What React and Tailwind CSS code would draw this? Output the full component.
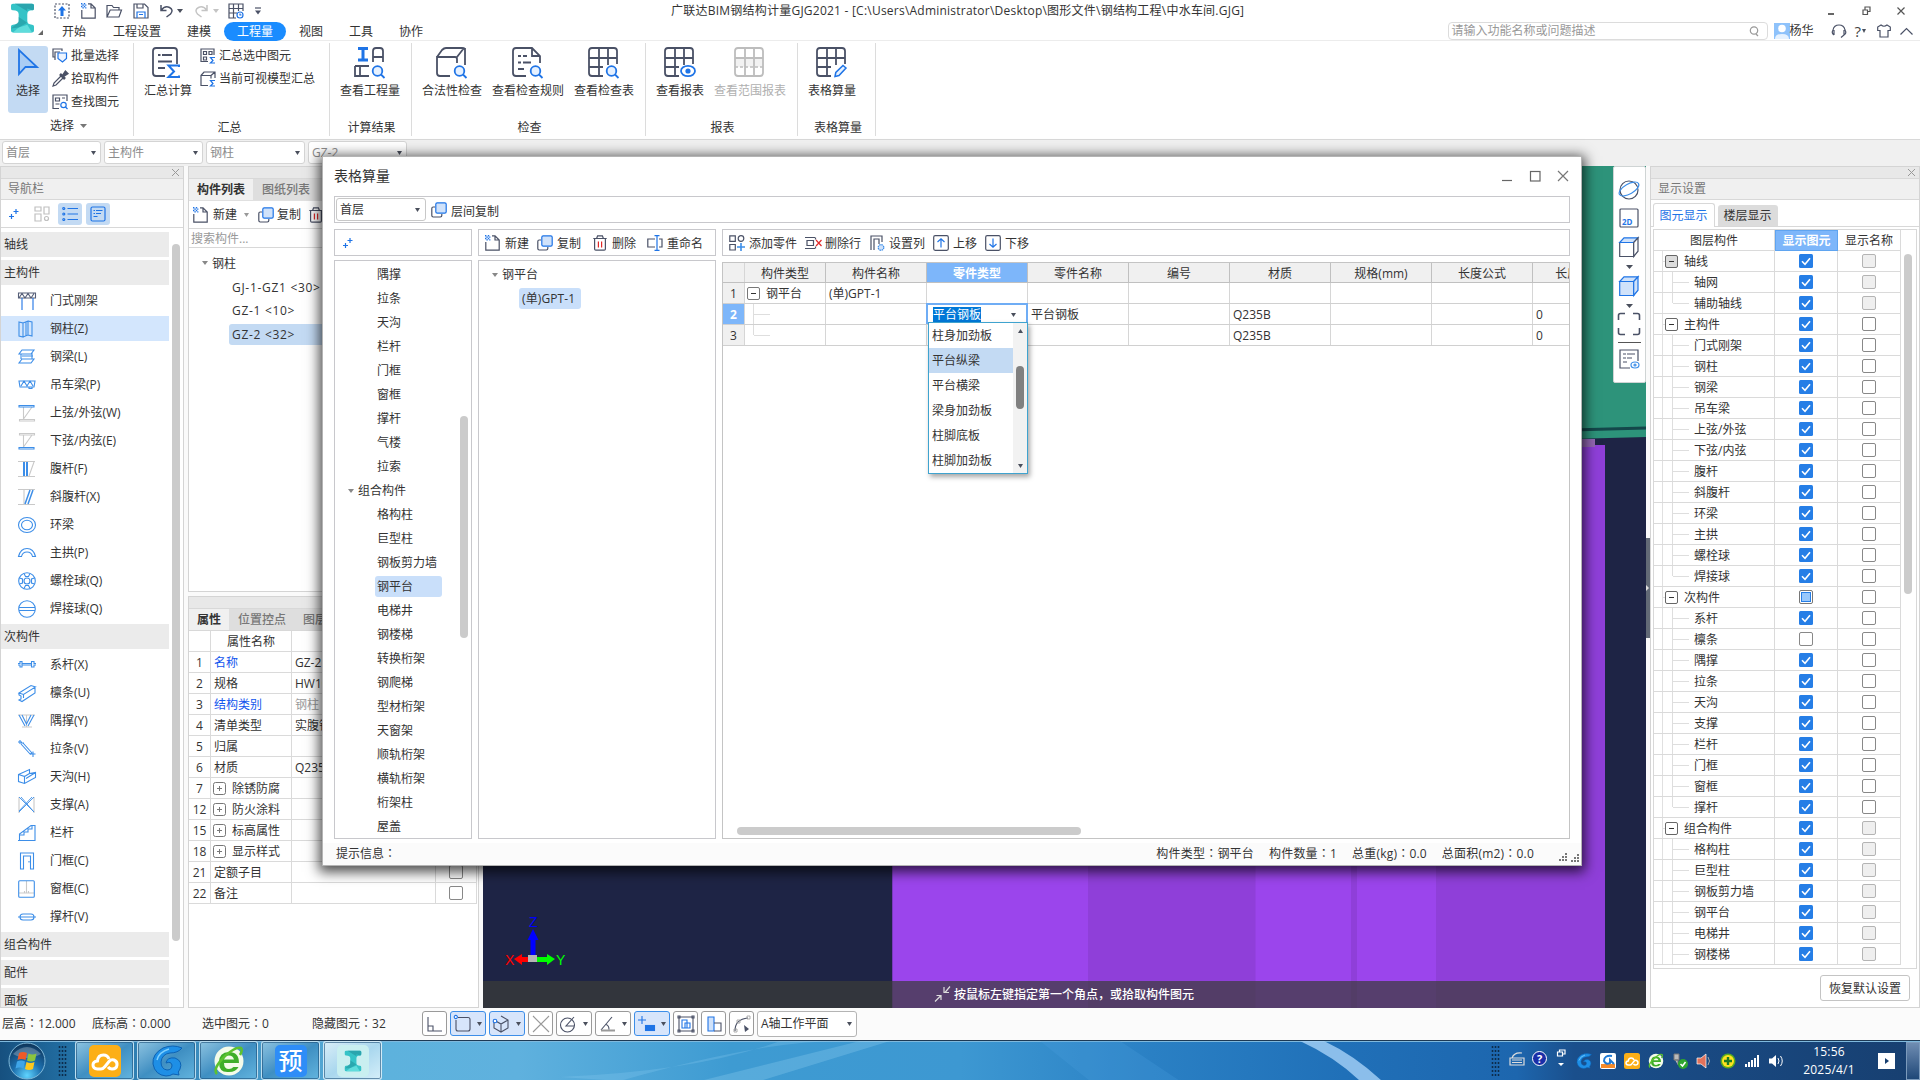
import React from 'react';
import clsx from 'clsx';

const DARK = '#4a5166';
const BLUE = '#1f74e6';
const SKY = '#3d8ee8';
const PALE = '#d0e2fa';

const Svg = ({ w = 16, h = w, vb, className, stroke = DARK, sw = 1.2, children }) => (
  <svg
    width={w}
    height={h}
    viewBox={vb || `0 0 ${w} ${h}`}
    fill="none"
    stroke={stroke}
    strokeWidth={sw}
    className={clsx('shrink-0 overflow-visible', className)}
  >
    {children}
  </svg>
);

const Caret = ({ className, color = '#4a4f5c', w = 6, up }) => (
  <svg width={w} height="4" viewBox="0 0 6 4" className={clsx('shrink-0', className)} preserveAspectRatio="none">
    <path d={up ? 'M0 4h6L3 0z' : 'M0 0h6L3 4z'} fill={color} />
  </svg>
);

// full-width colon centred in its cell
const Field = ({ name, value, className }) => (
  <span className={className}>
    {name}
    <span className="font-['Noto_Sans_CJK_JP',sans-serif] leading-none">：</span>
    {value}
  </span>
);

/* ---------- shared small icons ---------- */

const NewIcon = () => (
  <Svg>
    <path d="M.8 7v8.2h13.4V5L10 .8H7M10 .8V5h4.2" />
    <path d="M0 0h1.4v1.4H0zM2.8 0h1.4v1.4H2.8zM1.4 1.4h1.4v1.4H1.4zM4.2 1.4h1.2v1.4H4.2zM0 2.8h1.4v1.4H0zM2.8 2.8h1.4v1.4H2.8zM1.4 4.2h1.4v1.2H1.4zM4.2 4.2h1.2v1.2H4.2z" fill={BLUE} stroke="none" />
  </Svg>
);

const CopyIcon = () => (
  <Svg>
    <path d="M4 5H2.2Q.8 5 .8 6.4v7.2Q.8 15 2.2 15h7.2q1.4 0 1.4-1.4V12" />
    <rect x="4.8" y=".8" width="10.4" height="10.4" rx="1.4" stroke={BLUE} fill={PALE} />
  </Svg>
);

const TrashIcon = () => (
  <Svg w={14} h={16}>
    <path d="M.3 3.5h13.4M3.6 3.5L4.6.8h4.8l1 2.7M1.6 3.5V14q0 1.2 1.2 1.2h8.4q1.2 0 1.2-1.2V3.5" />
    <path d="M5.4 6.5v6M8.6 6.5v6" stroke="#e02828" />
  </Svg>
);

const SparkIcon = () => (
  <Svg w={10} h={10} stroke={BLUE}>
    <path d="M7 0v5M4.5 2.5h5M2.5 5v5M0 7.5h5" />
  </Svg>
);

const CubeIcon = ({ blue }) => (
  <Svg w={20} h={20} stroke={blue ? BLUE : DARK}>
    <path d="M.7 5.5h14v14h-14z" fill={blue ? PALE : 'none'} />
    <path d="M.7 5.5L5 .8h14l-4.3 4.7z" stroke={BLUE} fill={PALE} />
    <path d="M19 .8v13.4l-4.3 5.3v-14z" fill={blue ? PALE : '#fff'} />
  </Svg>
);

/* ---------- ribbon ---------- */

const GridBase = ({ color = DARK }) => (
  <path
    d="M15 29H4q-3 0-3-3V4q0-3 3-3h22q3 0 3 3v13M1 11h28M1 20h14M11 1v28M20 1v17"
    stroke={color}
    strokeWidth="1.8"
  />
);

const Lens = () => (
  <g stroke={BLUE} strokeWidth="1.8">
    <circle cx="23.5" cy="24" r="4.8" fill="#e6f1ff" />
    <path d="M27 27.5l3.5 3.5" />
  </g>
);

const bigIcons = {
  sum: (
    <>
      <path d="M13 29H4q-3 0-3-3V4q0-3 3-3h18q3 0 3 3v13" strokeWidth="1.8" />
      <path d="M6 8h2.500M10 8h10M6 14.500h14M6 21h7" strokeWidth="1.8" />
      <path d="M27 20v-1.500H16.500L22 24.500 16.500 30H27v-1.500" stroke={BLUE} strokeWidth="2" />
    </>
  ),
  quantity: (
    <>
      <path d="M4 1.500h10M4 13h10M9 1.500V13" stroke={BLUE} strokeWidth="3" />
      <path d="M19 15V4q0-3 3-3h4q3 0 3 3v11M19 10h10M1 19v10h14M1 19h14M6 19v10" strokeWidth="1.8" />
      <Lens />
    </>
  ),
  box: (
    <>
      <path d="M14 29H4q-3 0-3-3V10h18q2 0 2 2v4M1 10l5-7q2-2 4-2h16q2 0 3 1M28 1l-7 9M29 1v17" strokeWidth="1.8" />
      <Lens />
    </>
  ),
  rules: (
    <>
      <path d="M14 29H4q-3 0-3-3V4q0-3 3-3h16l8 8v7M20 1v8h8" strokeWidth="1.8" />
      <path d="M6 9h3M11 9h4M6 15.500h3M11 15.500h8M6 22h6" strokeWidth="1.8" />
      <Lens />
    </>
  ),
  table: (
    <>
      <GridBase />
      <Lens />
    </>
  ),
  report: (
    <>
      <GridBase />
      <ellipse cx="24" cy="24" rx="7" ry="5.200" stroke={BLUE} strokeWidth="1.8" fill="#fff" />
      <circle cx="24" cy="24" r="2.600" fill={BLUE} stroke="none" />
    </>
  ),
  range: (
    <>
      <path d="M1 11h28v9H1z" fill="#f2f2f2" stroke="none" />
      <path d="M4 1h22q3 0 3 3v22q0 3-3 3H4q-3 0-3-3V4q0-3 3-3zM1 11h28M11 1v28M20 1v28" stroke="#bdbdbd" strokeWidth="1.8" />
      <path d="M1 20h28" stroke="#bdbdbd" strokeWidth="1.4" strokeDasharray="3 2" />
    </>
  ),
  edit: (
    <>
      <GridBase />
      <path d="M19 29.500l.8-4L27 18.500l3 2.500-7 7.500z" stroke={BLUE} strokeWidth="1.5" fill="#e6f1ff" />
    </>
  ),
};

const BigButton = ({ icon, label, width, disabled }) => (
  <div className={clsx('flex shrink-0 flex-col items-center', width)}>
    <Svg w={31} h={32} className="mt-[4px] mr-[2px]">{bigIcons[icon]}</Svg>
    <span className={clsx('mt-[3px] leading-[18px] whitespace-nowrap', disabled && 'text-[#b0b0b0]')}>{label}</span>
  </div>
);

const Group = ({ label, width, labelPad, children }) => (
  <div className={clsx('flex h-[93px] shrink-0 flex-col justify-between border-r border-[#dcdcdc]', width)}>
    <div className="flex">{children}</div>
    <div className={clsx('flex h-[17px] items-center justify-center', labelPad)}>{label}</div>
  </div>
);

const SmallItem = ({ icon, label }) => (
  <div className="flex h-[23px] items-center gap-[3px] whitespace-nowrap">
    {icon}
    <span>{label}</span>
  </div>
);

const Logo = ({ w, h, className }) => (
  <svg width={w} height={h} viewBox="0 0 24 32" className={className}>
    <path d="M2 1h20q2 0 2 2v3q0 2-2 2-5 0-5 4v7q0 4 5 4 2 0 2 2v4q0 2-2 2H2q-2 0-2-2v-4q0-2 2-2 6 0 6-4v-7q0-4-6-4Q0 8 0 6V3q0-2 2-2z" fill="#35c3c7" />
    <path d="M4 1l13 8V6l5 2q2 0 2-2V3q0-2-2-2z" fill="#2aa5ae" />
    <path d="M2 31l6-5 9-3 5 8z" fill="#5fdcdb" />
    <path d="M0 27l8-7v-5l9 6-9 5z" fill="#23969f" opacity=".6" />
  </svg>
);

const ribbonTabs = [
  ['开始', 'ml-[62px]'],
  ['工程设置', 'ml-[27px]'],
  ['建模', 'ml-[26px]'],
  ['工程量', 'ml-[13px]'],
  ['视图', 'ml-[13px]'],
  ['工具', 'ml-[26px]'],
  ['协作', 'ml-[26px]'],
];

const TitleBar = () => (
  <div className="relative h-[41px] shrink-0 border-b border-[#ececec] bg-white">
    <Logo w={23} h={32} className="absolute top-[2px] left-[11px]" />
    <svg width="5" height="5" className="absolute top-[30px] left-[38px]">
      <path d="M5 0v5H0z" fill="#666" />
    </svg>
    <div className="flex h-[21px] items-center pl-[54px]">
      <Svg>
        <rect x="1" y="1" width="14" height="14" strokeDasharray="2 1.500" />
        <path d="M8 3l4 4.500H9.500V13h-3V7.500H4z" fill={BLUE} stroke="none" />
      </Svg>
      <span className="ml-[11px]"><NewIcon /></span>
      <Svg className="ml-[9px]">
        <path d="M1 14V2.500h5l1.500 2H13V7M1 14L4.200 7H15.500L13 14z" />
      </Svg>
      <Svg className="ml-[11px]">
        <path d="M1 1h10.500L15 4.500V15H1zM4 1v4h6V1" />
        <path d="M4 15V9h8v6M6 11.500h4" stroke={BLUE} />
      </Svg>
      <Svg w={14} h={14} className="ml-[10px]" sw={1.5}>
        <path d="M2 1v5.500h5.500M2 6.500Q6 1 10.500 3.500t1 6.500L7.500 13" />
      </Svg>
      <Caret className="ml-[4px]" />
      <Svg w={14} h={14} className="ml-[12px]" sw={1.5} stroke="#c4c4c4">
        <path d="M12 1v5.500H6.500M12 6.500Q8 1 3.500 3.500t-1 6.500L6.500 13" />
      </Svg>
      <Caret className="ml-[4px]" color="#c4c4c4" />
      <Svg className="ml-[9px]">
        <path d="M8 15H1V1h14v7M1 5.500h14M1 10h8M5.500 1v14M10.500 1v7" />
        <circle cx="12" cy="12" r="3" stroke={BLUE} fill="#fff" />
        <path d="M12 10.500V12h1.500" stroke={BLUE} />
      </Svg>
      <Svg w={6} h={8} className="ml-[11px]">
        <path d="M0 1h6" />
        <path d="M0 3.500h6L3 7.500z" fill={DARK} stroke="none" />
      </Svg>
      <span className="ml-[410px] tracking-[0.23px] whitespace-nowrap">
        广联达BIM钢结构计量GJG2021 - [C:\Users\Administrator\Desktop\图形文件\钢结构工程\中水车间.GJG]
      </span>
      <div className="mr-[15px] ml-auto flex items-center">
        <Svg w={8} h={8} sw={2} stroke="#666"><path d="M1 7h6" /></Svg>
        <Svg w={9} h={9} className="ml-[27px]" stroke="#555"><path d="M1 4h4.500v4.500H1zM3 4V1h5v4.500H5.500" /></Svg>
        <Svg w={8} h={8} className="ml-[26px]" stroke="#555"><path d="M.5.500l7 7M7.500.500l-7 7" /></Svg>
      </div>
    </div>
    <div className="flex h-[20px] items-center">
      {ribbonTabs.map(([label, margin]) => (
        <span
          key={label}
          className={clsx('leading-[19px] whitespace-nowrap', margin, label === '工程量' && 'h-[19px] rounded-full bg-[#1a8cff] px-[13px] text-white')}
        >
          {label}
        </span>
      ))}
      <div className="ml-auto flex h-[18px] w-[320px] items-center justify-between rounded-sm border border-[#dcdcdc] pr-[8px] pl-[3px] text-[#999]">
        <span>请输入功能名称或问题描述</span>
        <Svg w={10} h={10} stroke="#999"><circle cx="5" cy="4.500" r="3.700" /><path d="M7 8l2 2" /></Svg>
      </div>
      <Svg w={16} h={16} className="ml-[6px] bg-[#8ec2fb]" stroke="none">
        <circle cx="8" cy="5.500" r="3.800" fill="#fff" />
        <path d="M1 16q0-5 7-5t7 5z" fill="#e6f2ff" />
      </Svg>
      <span>杨华</span>
      <Svg w={16} h={14} className="ml-[17px]"><path d="M3 11Q0 9 2 6q1-5 6-5t6 5q2 3-1 5M3 6v5M13 6v5l-3 2.500" /></Svg>
      <span className="ml-[8px] text-[15px] text-[#444]">?</span>
      <Caret className="ml-[1px]" w={4} />
      <Svg w={14} h={14} className="ml-[11px]"><path d="M4 1q3 2.500 6 0l3.300 2v3.500H11V13H3V6.500H.7V3z" /></Svg>
      <Svg w={13} h={8} className="mr-[7px] ml-[9px]"><path d="M.5 7.500L6.500 1.500l6 6" /></Svg>
    </div>
  </div>
);

const Ribbon = () => (
  <div className="flex h-[99px] shrink-0 border-b border-[#d8d8d8] bg-white pt-[2px]">
    <Group
      width="w-[134px]"
      labelPad="mb-[2px] gap-[6px] pl-[4px]"
      label={<><span>选择</span><Caret w={7} color="#777" /></>}
    >
      <div className="mt-[3px] ml-[8px] flex h-[67px] w-[40px] flex-col items-center rounded-[3px] bg-[#c3daf3]">
        <Svg w={22} h={28} className="mt-[3px]" stroke={BLUE} sw={1.8}>
          <path d="M2 1v24l6.500-7H20z" fill="#a9ccf4" />
        </Svg>
        <span className="mt-[5px] leading-[18px]">选择</span>
      </div>
      <div className="mt-[1px] ml-[4px] flex flex-col">
        <SmallItem
          label="批量选择"
          icon={<Svg><path d="M3 9H1V1h9v2M3 12V4h5" /><path d="M6 5h8.500v5.500L10.500 14 6 10.500z" stroke={BLUE} fill="#eef5ff" /></Svg>}
        />
        <SmallItem
          label="拾取构件"
          icon={<Svg><path d="M9 5L2 12l-1 3 3-1 7-7" /><path d="M8 3l5 5M10.500 5.500L13.500 1l1.500 1.500z" strokeWidth="2.600" /></Svg>}
        />
        <SmallItem
          label="查找图元"
          icon={<Svg><path d="M7 14.500H1V1h14v6M3.500 4h4v3h-4zM10 4h3M3.500 10h4" /><circle cx="11.500" cy="11" r="2.700" stroke={BLUE} /><path d="M13.500 13l2 2" stroke={BLUE} /></Svg>}
        />
      </div>
    </Group>
    <Group width="w-[196px]" label="汇总" labelPad="pr-[4px]">
      <BigButton icon="sum" label="汇总计算" width="ml-[4px] w-[60px]" />
      <div className="mt-[1px] ml-[2px] flex flex-col">
        <SmallItem
          label="汇总选中图元"
          icon={<Svg><path d="M8 13.500H1V1h13v6M3.500 3.500h3v3h-3zM9 3.500h3v3H9zM3.500 9h3v3h-3z" /><path d="M15 9.500H10.500l2.500 3-2.500 2.500H15" stroke={BLUE} /></Svg>}
        />
        <SmallItem
          label="当前可视模型汇总"
          icon={<Svg><path d="M8 14.500H1V4.500h10v3M1 4.500L4 1h11v6M11 4.500L15 1" /><path d="M15 9.500H10.500l2.500 3-2.500 2.500H15" stroke={BLUE} /></Svg>}
        />
      </div>
    </Group>
    <Group width="w-[82px]" label="计算结果" labelPad="pl-[2px]">
      <BigButton icon="quantity" label="查看工程量" width="w-[80px]" />
    </Group>
    <Group width="w-[234px]" label="检查" labelPad="pl-[2px]">
      <BigButton icon="box" label="合法性检查" width="w-[80px]" />
      <BigButton icon="rules" label="查看检查规则" width="w-[72px]" />
      <BigButton icon="table" label="查看检查表" width="w-[80px]" />
    </Group>
    <Group width="w-[152px]" label="报表" labelPad="pl-[2px]">
      <BigButton icon="report" label="查看报表" width="w-[68px]" />
      <BigButton icon="range" label="查看范围报表" width="w-[72px]" disabled />
    </Group>
    <Group width="w-[78px]" label="表格算量" labelPad="pl-[3px]">
      <BigButton icon="edit" label="表格算量" width="w-[68px]" />
    </Group>
  </div>
);

const FilterBar = () => (
  <div className="flex h-[26px] shrink-0 gap-[3px] bg-[#f0f0f0] pt-[1px] pl-[2px]">
    {['首层', '主构件', '钢柱', 'GZ-2'].map((t) => (
      <div key={t} className="flex h-[23px] w-[99px] items-center justify-between rounded-[3px] border border-[#d4d4d4] bg-white pr-[4px] pl-[3px] text-[#8c8c8c]">
        <span>{t}</span>
        <Caret w={5} />
      </div>
    ))}
  </div>
);

/* ---------- navigation ---------- */

const G = '#c9c9c9';
const navIcons = {
  门式刚架: <><path d="M.500 1h17v5H.500zM1 6l3-4.500L7 6l3-4.500L13 6l3-4.500" stroke="#555e77" /><path d="M4 6v12M15 6v12" stroke={BLUE} /></>,
  '钢柱(Z)': <path d="M1 2l4 1v14l-4-1zM5 3l5-2v14l-5 2M8 2v14M10 1l4 1v14l-4-1" />,
  '钢梁(L)': <path d="M4 2h12l-3 4H1zM3 6v5M14 5v6M4 11h12l-3 4H1zM4 8h11" />,
  '吊车梁(P)': <path d="M1 5h16l-1 6H2zM3 10l3-5 3 5 3-5 3 5M11 11v1.500h3V11" />,
  '上弦/外弦(W)': <><path d="M5.500 16V3M14 3L5.500 15M1.500 15.500h15v1.500h-15z" stroke={G} /><path d="M1 1.500h15v1.500H1z" /></>,
  '下弦/内弦(E)': <><path d="M5.500 16V3M14 3L5.500 15M1.500 1.500h15v1.500h-15z" stroke={G} /><path d="M1 15.500h15v1.500H1z" /></>,
  '腹杆(F)': <><path d="M0 1.500h17M0 16.500h17M16 2L11 16" stroke={G} /><path d="M6 2v14M9 2v14" strokeWidth="2" /></>,
  '斜腹杆(X)': <><path d="M0 1.500h17M0 16.500h17M6 2v14" stroke={G} /><path d="M12 2L7 16M15 2l-5 14" strokeWidth="1.500" /></>,
  环梁: <><ellipse cx="9" cy="9" rx="8.500" ry="7.500" /><ellipse cx="9" cy="9" rx="5.500" ry="4.800" /></>,
  '主拱(P)': <path d="M.500 12.500q2-8 8.500-8t8.500 8h-3q-1-4.500-5.500-4.500t-5.500 4.500z" />,
  '螺栓球(Q)': <><circle cx="9" cy="9" r="8.300" /><circle cx="9" cy="9" r="3" /><path d="M6 1.500l1.500 3h3l1.500-3M6 16.500l1.500-3h3l1.500 3M1.500 6l3 1v4l-3 1M16.500 6l-3 1v4l3 1" /></>,
  '焊接球(Q)': <><circle cx="9" cy="9" r="8.300" /><path d="M1 7.500h16M1 10.500h16" /></>,
  '系杆(X)': <path d="M0 7.500h2v-2h2v5.500H2V9H0M4 7.500h9M4 9h9M18 7.500h-2v-2h-2.500v5.500H16V9h2" />,
  '檩条(U)': <path d="M1 9l12-7.500 4.500 1.500L5.500 10.500zM5.500 10.500v3.500M1 9v2l2 1v3l-2 1 3 1.500L17 9V3" />,
  '隅撑(Y)': <><path d="M0 3h17M4 15h10M8.500 3v12" stroke={G} /><path d="M1 3l6 11M4 3l4.500 9L13 3M16 3l-6 11" /></>,
  '拉条(V)': <path d="M0 2h4M2 0v4M3 4l9.500 10.500M5 3l9 10M12 14h5.500M15 11.500v5.500M3 3h3M12 14.500l2-2" />,
  '天沟(H)': <path d="M.500 6.500l11-5v4l6-1v5l-11 6-6-2zM.500 6.500l6 2v7M6.500 8.500l5-3M8 10.500l9.500-6" />,
  '支撑(A)': <><path d="M1 1v16M16 1v16" stroke={G} /><path d="M1 1l15 15M3 1l13 15M16 1L1 16M14 1L1 15" strokeWidth=".9" /></>,
  栏杆: <path d="M0 16.500h17V1.500h-4L1.500 10v6.500M1.500 11H6V8h4V5h4V1.500" />,
  '门框(C)': <path d="M2.500 17V1h13v16h-3V4h-7v13zM11 9v1.500" />,
  '窗框(C)': <><path d="M8.500 1v12M1 13h15M6.500 13v-2M10.500 13v-2" stroke={G} /><rect x=".7" y=".7" width="15.600" height="16.600" rx="1" /></>,
  '撑杆(V)': <path d="M0 9h18M5 6h8q3 0 3 3t-3 3H5Q2 12 2 9t3-3z" />,
};

const navList = [
  { group: '轴线' },
  { group: '主构件' },
  ...['门式刚架', '钢柱(Z)', '钢梁(L)', '吊车梁(P)', '上弦/外弦(W)', '下弦/内弦(E)', '腹杆(F)', '斜腹杆(X)', '环梁', '主拱(P)', '螺栓球(Q)', '焊接球(Q)'].map((name) => ({ name })),
  { group: '次构件' },
  ...['系杆(X)', '檩条(U)', '隅撑(Y)', '拉条(V)', '天沟(H)', '支撑(A)', '栏杆', '门框(C)', '窗框(C)', '撑杆(V)'].map((name) => ({ name })),
  { group: '组合构件' },
  { group: '配件' },
  { group: '面板' },
];

const NavPanel = () => (
  <div className="flex w-[184px] shrink-0 flex-col border border-[#d4d4d4] bg-white">
    <div className="flex h-[11px] shrink-0 items-center justify-end bg-[#e8e8e8] pr-[4px]">
      <Svg w={7} h={7} stroke="#999" sw={1}><path d="M0 0l7 7M7 0L0 7" /></Svg>
    </div>
    <div className="flex h-[22px] shrink-0 items-center border-y border-[#d8d8d8] bg-[#f0f0f0] pl-[7px] text-[#777]">导航栏</div>
    <div className="flex h-[28px] shrink-0 items-center border-b border-[#d8d8d8] pl-[8px]">
      <SparkIcon />
      <Svg className="ml-[15px]" stroke="#c0c0c0">
        <path d="M1 1h6v4H1zM10 1h5v7h-5zM1 8h6v7H1z" /><circle cx="12.500" cy="12.500" r="2" />
      </Svg>
      <span className="ml-[8px] flex h-[22px] w-[24px] items-center justify-center rounded-[3px] bg-[#c3daf3]">
        <Svg stroke={BLUE}><path d="M5.500 2.500H16M5.500 8H16M5.500 13.500H16" /><circle cx="1.800" cy="2.500" r="1" /><circle cx="1.800" cy="8" r="1" /><circle cx="1.800" cy="13.500" r="1" /></Svg>
      </span>
      <span className="ml-[4px] flex h-[22px] w-[24px] items-center justify-center rounded-[3px] bg-[#c3daf3]">
        <Svg stroke={BLUE}><rect x="1" y="1" width="14" height="14" rx="1.500" /><path d="M3.500 4.500H5M6 4.500h6.500M3.500 7.500H5M6 7.500h5M3.500 10.500h4" /></Svg>
      </span>
    </div>
    <div className="flex min-h-0 flex-1 overflow-hidden">
      <div className="w-[168px] pt-[4px]">
        {navList.map((item) =>
          item.group ? (
            <div key={item.group} className="mb-[3px] flex h-[25px] items-center bg-[#ebebeb] pl-[3px]">{item.group}</div>
          ) : (
            <div
              key={item.name}
              className={clsx('mb-[3px] flex h-[25px] items-center pl-[17px]', item.name === '钢柱(Z)' && 'bg-[#d3e6fd]')}
            >
              <Svg w={18} h={18} stroke={SKY} sw={1.1}>{navIcons[item.name]}</Svg>
              <span className="ml-[14px]">{item.name}</span>
            </div>
          )
        )}
      </div>
      <div className="mt-[16px] ml-[3px] h-[697px] w-[8px] rounded-full bg-[#cbcbcb]" />
    </div>
  </div>
);

/* ---------- component list + properties ---------- */

const ComponentPanel = () => (
  <div className="flex h-[426px] shrink-0 flex-col border border-[#d4d4d4] bg-white">
    <div className="h-[12px] shrink-0 border-b border-[#d8d8d8] bg-[#e8e8e8]" />
    <div className="flex h-[22px] shrink-0 border-b border-[#e0e0e0] bg-[#dedede] leading-[21px]">
      <span className="w-[64px] bg-[#f0f0f0] text-center font-bold">构件列表</span>
      <span className="ml-[9px] font-medium text-[#777]">图纸列表</span>
    </div>
    <div className="flex h-[28px] shrink-0 items-center border-b border-[#d8d8d8] pl-[4px]">
      <NewIcon />
      <span className="mt-px ml-[4px]">新建</span>
      <Caret w={5} color="#999" className="ml-[7px]" />
      <span className="ml-[9px]"><CopyIcon /></span>
      <span className="mt-px ml-[3px]">复制</span>
      <span className="ml-[8px]"><TrashIcon /></span>
    </div>
    <div className="flex h-[19px] shrink-0 items-center border-b border-[#d8d8d8] pt-px pl-[2px] text-[#999]">搜索构件...</div>
    <div className="pt-[3px] leading-[21px] tracking-[0.7px]">
      <div className="flex h-[24px] items-center pl-[13px] tracking-normal">
        <Caret color="#888" />
        <span className="ml-[4px]">钢柱</span>
      </div>
      <div className="flex h-[24px] items-center pl-[43px] whitespace-nowrap">GJ-1-GZ1 &lt;30&gt;</div>
      <div className="flex h-[23px] items-center pl-[43px]">GZ-1 &lt;10&gt;</div>
      <div className="mt-[2px] ml-[40px] h-[21px] rounded-[3px] bg-[#c3daf3] pl-[3px]">GZ-2 &lt;32&gt;</div>
    </div>
  </div>
);

const propRows = [
  [1, '名称', 'GZ-2', 'blue'],
  [2, '规格', 'HW100*100'],
  [3, '结构类别', '钢柱', 'blue'],
  [4, '清单类型', '实腹钢柱'],
  [5, '归属', ''],
  [6, '材质', 'Q235B'],
  [7, '除锈防腐', '', 'plus'],
  [12, '防火涂料', '', 'plus'],
  [15, '标高属性', '', 'plus'],
  [18, '显示样式', '', 'plus'],
  [21, '定额子目', ''],
  [22, '备注', ''],
];

const PropertyPanel = () => (
  <div className="mt-[4px] flex min-h-0 flex-1 flex-col border border-[#d4d4d4] bg-white">
    <div className="h-[12px] shrink-0 border-b border-[#d8d8d8] bg-[#e8e8e8]" />
    <div className="flex h-[22px] shrink-0 border-b border-[#d8d8d8] bg-[#dedede] leading-[21px]">
      <span className="w-[40px] bg-[#f0f0f0] text-center font-bold">属性</span>
      <span className="ml-[9px] font-medium text-[#777]">位置控点</span>
      <span className="ml-[17px] font-medium text-[#777]">图层</span>
    </div>
    <div className="w-[288px]">
      <div className="flex h-[21px] border-b border-[#dadada] leading-[21px]">
        <span className="w-[22px] border-r border-[#dadada]" />
        <span className="w-[81px] border-r border-[#dadada] text-center">属性名称</span>
        <span className="w-[144px] border-r border-[#dadada] text-center">属性值</span>
        <span className="flex-1 border-r border-[#dadada]" />
      </div>
      {propRows.map(([n, name, value, kind]) => (
        <div key={n} className="flex h-[21px] border-b border-[#dadada] leading-[21px]">
          <span className="w-[22px] border-r border-[#dadada] text-center">{n}</span>
          <span className={clsx('flex w-[81px] items-center border-r border-[#dadada] pl-[3px]', kind === 'blue' && 'text-[#1155ee]')}>
            {kind === 'plus' && (
              <Svg w={13} h={13} className="mr-[6px] -ml-px" stroke="#777" sw={1}>
                <rect x=".5" y=".5" width="12" height="12" rx="2" />
                <path d="M4 6.500h5M6.500 4v5" />
              </Svg>
            )}
            {name}
          </span>
          <span className={clsx('w-[144px] border-r border-[#dadada] pl-[3px]', n === 3 && 'text-[#999]')}>{value}</span>
          <span className="flex flex-1 items-center justify-center border-r border-[#dadada]">
            <span className="h-[14px] w-[14px] rounded-[2px] border border-[#888]" />
          </span>
        </div>
      ))}
    </div>
  </div>
);

/* ---------- 3d view ---------- */

const ViewTools = () => (
  <div className="absolute top-0 right-0 flex h-[217px] w-[33px] flex-col items-center rounded-[2px] border border-[#cfd4d4] bg-white pr-px">
    <Svg w={22} h={20} className="mt-[13px]">
      <circle cx="11" cy="10" r="9" />
      <ellipse cx="11" cy="9" rx="11" ry="5" stroke={SKY} transform="rotate(-30 11 9)" />
    </Svg>
    <Svg w={20} h={20} className="mt-[8px]">
      <rect x="1" y="1" width="18" height="18" rx="1" />
      <text x="3" y="16.500" fontSize="8" fontWeight="bold" fill={BLUE} stroke="none">2D</text>
    </Svg>
    <span className="mt-[9px]"><CubeIcon /></span>
    <Caret w={7} className="mt-[8px]" />
    <span className="mt-[7px]"><CubeIcon blue /></span>
    <Caret w={7} className="mt-[8px]" />
    <Svg w={24} h={24} className="mt-[4px]" sw={1.600}>
      <path d="M1.500 8V3.500q0-2 2-2H8M16 1.500h4.500q2 0 2 2V8M22.500 16v4.500q0 2-2 2H16M8 22.500H3.500q-2 0-2-2V16" />
    </Svg>
    <div className="mt-[6px] h-px w-[23px] shrink-0 bg-[#555]" />
    <Svg w={20} h={20} className="mt-[6px]">
      <path d="M11 19H1V1h18v11M4 5h3M8 5h8M4 9h3M8 9h5M4 13h4" />
      <ellipse cx="16" cy="16" rx="4" ry="3" stroke={SKY} fill="#fff" />
      <circle cx="16" cy="16" r="1" stroke={SKY} />
    </Svg>
  </div>
);

const Viewport = () => (
  <div className="relative ml-[4px] w-[1163px] shrink-0 overflow-hidden bg-[#1e2445]">
    <svg width="1163" height="842" viewBox="483 166 1163 842" className="block">
      <rect x="483" y="166" width="1163" height="842" fill="#1e2445" />
      <path d="M1500 166h146v271l-146 4z" fill="#2d937a" />
      <path d="M1500 430.500l146-4v3l-146 4z" fill="#14474a" />
      <rect x="892.500" y="445" width="712.500" height="563" fill="#8f3fd9" />
      <rect x="892.500" y="600" width="195.500" height="408" fill="#9b45ec" />
      <rect x="1255.500" y="600" width="180.500" height="408" fill="#9b45ec" />
      <rect x="1351" y="600" width="6" height="408" fill="#8f3fd9" />
      <rect x="1570" y="439" width="25" height="8" fill="#9467b4" />
      <path d="M533 929l-5.500 11h3v15h5v-15h3z" fill="#0000ff" />
      <path d="M514 959l8-5v3h9v5h-9v3z" fill="#ff0000" />
      <path d="M555 959l-8-5v3h-11v5h11v3z" fill="#00ff00" />
      <path d="M528 955h9v7h-9z" fill="#b5b5b5" />
      <g fontSize="14" fontFamily="Liberation Sans">
        <text x="529" y="927" fill="#0000ff">Z</text>
        <text x="505" y="965" fill="#ff0000">X</text>
        <text x="556" y="965" fill="#00ff00">Y</text>
      </g>
    </svg>
    <div className="absolute bottom-0 left-0 flex h-[27px] w-full items-center bg-[rgba(59,60,58,0.715)] pl-[452px] font-medium text-white">
      <Svg w={16} h={16} className="-mt-[2px]" stroke="#ddd">
        <path d="M0 15.500l6-6M1.500 9.500H6V14M15 .5l-5 6M9 1v5.500h5" />
      </Svg>
      <span className="ml-[3px]">按鼠标左键指定第一个角点，或拾取构件图元</span>
    </div>
    <ViewTools />
  </div>
);

/* ---------- display settings ---------- */

const Check = ({ state }) => {
  if (state === 'on') {
    return (
      <svg width="14" height="14" viewBox="0 0 14 14">
        <rect width="14" height="14" rx="1.500" fill="#267ee6" />
        <path d="M3 7.200l3 3 5-6" fill="none" stroke="#fff" strokeWidth="1.600" />
      </svg>
    );
  }
  if (state === 'part') {
    return (
      <span className="flex h-[14px] w-[14px] items-center justify-center rounded-[2px] border border-[#777] bg-white">
        <span className="h-[10px] w-[10px] border border-[#267ee6] bg-[#98c8fc]" />
      </span>
    );
  }
  return (
    <span className={clsx('h-[14px] w-[14px] rounded-[2px] border', state === 'disabled' ? 'border-[#b4b4b4] bg-[#efefef]' : 'border-[#888] bg-white')} />
  );
};

const layerGroups = [
  { name: '轴线', items: ['轴网', '辅助轴线'], label: 'disabled' },
  { name: '主构件', items: ['门式刚架', '钢柱', '钢梁', '吊车梁', '上弦/外弦', '下弦/内弦', '腹杆', '斜腹杆', '环梁', '主拱', '螺栓球', '焊接球'], label: 'off' },
  { name: '次构件', items: ['系杆', '檩条', '隅撑', '拉条', '天沟', '支撑', '栏杆', '门框', '窗框', '撑杆'], label: 'off', part: true },
  { name: '组合构件', items: ['格构柱', '巨型柱', '钢板剪力墙', '钢平台', '电梯井', '钢楼梯'], label: 'disabled', open: true },
];

const LayerRow = ({ parent, last, name, show, label }) => (
  <div className="flex h-[21px] border-b border-[#dadada]">
    <div className="flex w-[121px] items-center border-r border-[#dadada]">
      <span className="h-full w-[9px] border-r border-[#e0e0e0]" />
      {parent ? (
        <>
          <span className="h-px w-[3px] bg-[#e0e0e0]" />
          <Svg w={13} h={13} className="-ml-px" stroke="#666" sw={1}>
            <rect x=".5" y=".5" width="12" height="12" rx="1.500" fill={name === '轴线' ? '#dcdcdc' : '#fff'} />
            <path d="M4 6.500h5" stroke="#333" />
          </Svg>
          <span className="mt-px ml-[6px] leading-[20px]">{name}</span>
        </>
      ) : (
        <>
          <span className={clsx('w-[10px] self-start border-r border-[#dedede]', last ? 'h-[10px]' : 'h-full')} />
          <span className="h-px w-[16px] bg-[#dedede]" />
          <span className="mt-px ml-[5px] leading-[20px]">{name}</span>
        </>
      )}
    </div>
    <div className="flex w-[63px] items-center justify-center border-r border-[#dadada]"><Check state={show} /></div>
    <div className="flex w-[63px] items-center justify-center border-r border-[#dadada]"><Check state={label} /></div>
  </div>
);

const DisplayPanel = () => (
  <div className="ml-auto flex w-[270px] shrink-0 flex-col border border-[#d4d4d4] bg-white">
    <div className="flex h-[11px] shrink-0 items-center justify-end bg-[#e8e8e8] pr-[4px]">
      <Svg w={7} h={7} stroke="#999" sw={1}><path d="M0 0l7 7M7 0L0 7" /></Svg>
    </div>
    <div className="flex h-[22px] shrink-0 items-center border-y border-[#d8d8d8] bg-[#f0f0f0] pl-[7px] text-[#777]">显示设置</div>
    <div className="flex h-[27px] shrink-0 items-end gap-[3px] border-b border-[#d8d8d8] pl-[2px]">
      <span className="-mb-px h-[24px] w-[62px] rounded-t-[3px] border border-b-0 border-[#d8d8d8] bg-white pr-px text-center leading-[24px] whitespace-nowrap text-[#1f74e6]">图元显示</span>
      <span className="h-[21px] w-[60px] rounded-t-[3px] bg-[#dcdcdc] pr-px text-center leading-[21px]">楼层显示</span>
    </div>
    <div className="mt-[2px] ml-[2px] flex h-[740px] w-[264px] shrink-0 overflow-hidden border border-[#d8d8d8]">
      <div className="w-[247px] shrink-0">
        <div className="flex h-[21px] border-b border-[#dadada] text-center leading-[21px]">
          <span className="w-[121px] border-r border-[#dadada]">图层构件</span>
          <span className="-mb-px h-[21px] w-[63px] border border-[#5fa4f0] bg-[#7db6fa] leading-[19px] font-bold text-white">显示图元</span>
          <span className="w-[63px] border-r border-[#dadada]">显示名称</span>
        </div>
        {layerGroups.map((g) => (
          <React.Fragment key={g.name}>
            <LayerRow parent name={g.name} show={g.part ? 'part' : 'on'} label={g.label} />
            {g.items.map((name, i) => (
              <LayerRow
                key={name}
                name={name}
                last={!g.open && i === g.items.length - 1}
                show={name === '檩条' ? 'off' : 'on'}
                label={g.label}
              />
            ))}
          </React.Fragment>
        ))}
      </div>
      <div className="mt-[24px] ml-[3px] h-[340px] w-[8px] rounded-full bg-[#cbcbcb]" />
    </div>
    <div className="mt-[6px] mr-[9px] flex h-[26px] w-[90px] items-center justify-center self-end rounded-[3px] border border-[#c4c4c4] pt-px">恢复默认设置</div>
  </div>
);

/* ---------- dialog ---------- */

const treeItems = [
  '隅撑', '拉条', '天沟', '栏杆', '门框', '窗框', '撑杆', '气楼', '拉索', '组合构件', '格构柱', '巨型柱',
  '钢板剪力墙', '钢平台', '电梯井', '钢楼梯', '转换桁架', '钢爬梯', '型材桁架', '天窗架', '顺轨桁架', '横轨桁架', '桁架柱', '屋盖',
];

const columns = ['构件类型', '构件名称', '零件类型', '零件名称', '编号', '材质', '规格(mm)', '长度公式', '长度(mm)'];
const partOptions = ['柱身加劲板', '平台纵梁', '平台横梁', '梁身加劲板', '柱脚底板', '柱脚加劲板'];

const Cell = ({ className, children }) => (
  <div className={clsx('h-full shrink-0 border-r border-[#d6d6d6]', className)}>{children}</div>
);

const PartSelect = () => (
  <div className="relative -mt-px -ml-px flex h-[21px] w-[102px] items-center border-2 border-b-0 border-[#6fadf5] bg-white pl-[5px]">
    <span className="h-[15px] bg-[#0078d7] leading-[15px] text-white">平台钢板</span>
    <Caret w={5} className="mr-[10px] ml-auto" />
    <div className="absolute top-[17px] left-0 z-10 flex h-[152px] w-[100px] border border-[#3fa3cf] bg-white shadow-[2px_3px_5px_rgba(0,0,0,0.35)]">
      <div className="w-[84px]">
        {partOptions.map((t) => (
          <div key={t} className={clsx('flex h-[25px] items-center pl-[3px] whitespace-nowrap', t === '平台纵梁' && 'bg-[#c3daf3]')}>{t}</div>
        ))}
      </div>
      <div className="flex flex-1 flex-col items-center bg-[#f2f2f2] pt-[6px] pb-[5px]">
        <Caret w={5} up />
        <div className="mt-[33px] h-[43px] w-[8px] rounded-full bg-[#808080]" />
        <Caret w={5} className="mt-auto" />
      </div>
    </div>
  </div>
);

const PartsGrid = () => (
  <div className="mt-[2px] flex h-[577px] w-[848px] flex-col overflow-hidden border border-[#c4c4c4]">
    <div className="flex h-[20px] shrink-0 border-b border-[#c0c0c0] bg-[#f0f0f0] text-center leading-[21px]">
      <Cell className="w-[22px] border-[#c0c0c0]" />
      {columns.map((c, i) => (
        <div
          key={c}
          className={clsx(
            'h-[19px] shrink-0 border-r border-[#c0c0c0] whitespace-nowrap',
            i === 0 ? 'w-[81px]' : 'w-[101px]',
            i === 8 && 'pr-[2px]',
            c === '零件类型' && 'bg-[#7db6fa] font-bold text-white'
          )}
        >
          {c}
        </div>
      ))}
    </div>
    {[1, 2, 3].map((n) => (
      <div key={n} className="flex h-[21px] shrink-0 border-b border-[#d0d0d0] leading-[21px]">
        <Cell className={clsx('w-[22px] text-center', n === 2 ? 'bg-[#7db6fa] font-bold text-white' : 'bg-[#f0f0f0]')}>{n}</Cell>
        <Cell className="flex w-[81px] items-center">
          {n === 1 ? (
            <>
              <Svg w={13} h={13} className="ml-[2px]" stroke="#777" sw={1}>
                <rect x=".5" y=".5" width="12" height="12" rx="1.500" />
                <path d="M4 6.500h5" stroke="#333" />
              </Svg>
              <span className="ml-[6px]">钢平台</span>
            </>
          ) : (
            <>
              <span className={clsx('w-[9px] self-start border-r border-[#dedede]', n === 2 ? 'h-full' : 'h-[10px]')} />
              <span className="h-px w-[16px] bg-[#dedede]" />
            </>
          )}
        </Cell>
        <Cell className="w-[101px] pl-[3px]">{n === 1 && '(单)GPT-1'}</Cell>
        <Cell className="w-[101px]">{n === 2 && <PartSelect />}</Cell>
        <Cell className="w-[101px] pl-[3px]">{n === 2 && '平台钢板'}</Cell>
        <Cell className="w-[101px]" />
        <Cell className="w-[101px] pl-[3px]">{n > 1 && 'Q235B'}</Cell>
        <Cell className="w-[101px]" />
        <Cell className="w-[101px]" />
        <Cell className="w-[101px] pl-[3px]">{n > 1 && '0'}</Cell>
      </div>
    ))}
    <div className="mt-auto mb-[3px] ml-[14px] h-[8px] w-[344px] shrink-0 rounded-full bg-[#cbcbcb]" />
  </div>
);

const box = 'flex h-[27px] items-center border border-[#c8c8cc]';

const Dialog = () => (
  <div className="absolute top-[156px] left-[322px] flex h-[710px] w-[1260px] flex-col border border-[#b4b4b4] bg-white shadow-[0_3px_12px_3px_rgba(0,0,0,0.7)]">
    <div className="flex h-[39px] shrink-0 items-center justify-between pr-[13px] pb-[2px] pl-[11px] text-[14px]">
      <span>表格算量</span>
      <div className="flex items-center">
        <Svg w={10} h={10} stroke="#666"><path d="M0 9.500h10" /></Svg>
        <Svg w={10} h={10} className="ml-[18px]" stroke="#666"><rect x=".5" y=".5" width="9.500" height="9.500" /></Svg>
        <Svg w={10} h={10} className="ml-[18px]" stroke="#777"><path d="M0 0l10 10M10 0L0 10" /></Svg>
      </div>
    </div>
    <div className={clsx(box, 'mx-[11px] shrink-0')}>
      <div className="ml-px flex h-[23px] w-[90px] items-center justify-between rounded-[3px] border border-[#c8c8c8] pr-[5px] pl-[3px]">
        <span>首层</span>
        <Caret w={5} />
      </div>
      <span className="ml-[5px]"><CopyIcon /></span>
      <span className="ml-[4px] pt-[5px]">层间复制</span>
    </div>
    <div className="mx-[11px] mt-[6px] flex shrink-0 gap-[6px]">
      <div className={clsx(box, 'w-[138px] pl-[8px]')}><SparkIcon /></div>
      <div className={clsx(box, 'w-[238px] pl-[6px]')}>
        <NewIcon />
        <span className="mt-[2px] ml-[4px]">新建</span>
        <span className="ml-[8px]"><CopyIcon /></span>
        <span className="mt-[2px] ml-[4px]">复制</span>
        <span className="ml-[12px]"><TrashIcon /></span>
        <span className="mt-[2px] ml-[5px]">删除</span>
        <Svg className="ml-[11px]"><path d="M8 4H.8v8H8M12 4h3v8h-3" /><path d="M10 0v16M7.500.600h5M7.500 15.400h5" stroke={BLUE} /></Svg>
        <span className="mt-[2px] ml-[4px]">重命名</span>
      </div>
      <div className={clsx(box, 'w-[848px] pl-[6px]')}>
        <Svg><path d="M.8.800h5.500v5.500H.8zM.8 9.500h5.500V15H.8z" /><circle cx="12" cy="3.500" r="2.800" /><path d="M12 8v8M8 12h8" stroke={SKY} strokeWidth="1.600" /></Svg>
        <span className="mt-[2px] ml-[4px]">添加零件</span>
        <Svg w={17} h={14} className="ml-[8px]"><path d="M0 1.500h10M0 12.500h10M2 4.500h6.500v5H2zM10.500 1.500v2M10.500 10.500v2" /><path d="M11 4l5.500 6M16.500 4L11 10" stroke="#e02828" /></Svg>
        <span className="mt-[2px] ml-[3px]">删除行</span>
        <Svg w={15} h={16} className="ml-[9px]"><path d="M1 15V1h11v6M4 15V4h5v5" /><circle cx="11" cy="12.500" r="2.800" stroke={SKY} fill={PALE} strokeDasharray="1.500 .7" /></Svg>
        <span className="mt-[2px] ml-[4px]">设置列</span>
        <Svg className="ml-[8px]"><rect x=".700" y=".700" width="14.600" height="14.600" rx="1.500" /><path d="M8 12.500V4M4.500 7L8 3.800 11.500 7" stroke={BLUE} /></Svg>
        <span className="mt-[2px] ml-[4px]">上移</span>
        <Svg className="ml-[8px]"><rect x=".700" y=".700" width="14.600" height="14.600" rx="1.500" /><path d="M8 3.500V12M4.500 9L8 12.200 11.500 9" stroke={BLUE} /></Svg>
        <span className="mt-[2px] ml-[4px]">下移</span>
      </div>
    </div>
    <div className="mx-[11px] mt-[4px] flex shrink-0 gap-[6px]">
      <div className="flex h-[579px] w-[138px] justify-between overflow-hidden border border-[#c8c8cc] pr-[3px]">
        <div className="pt-px">
          {treeItems.map((t) =>
            t === '组合构件' ? (
              <div key={t} className="flex h-[24px] items-center pt-px pl-[13px]">
                <Caret color="#888" />
                <span className="ml-[4px]">{t}</span>
              </div>
            ) : (
              <div key={t} className="flex h-[24px] items-center pl-[40px]">
                <span className={clsx('h-[21px] pl-[2px] leading-[21px]', t === '钢平台' && 'w-[67px] rounded-[3px] bg-[#c9dffa]')}>{t}</span>
              </div>
            )
          )}
        </div>
        <div className="mt-[155px] h-[222px] w-[8px] rounded-full bg-[#cbcbcb]" />
      </div>
      <div className="h-[579px] w-[238px] border border-[#c8c8cc] pt-[2px]">
        <div className="flex h-[24px] items-center pl-[13px]">
          <Caret color="#888" />
          <span className="ml-[4px]">钢平台</span>
        </div>
        <div className="mt-px ml-[40px] h-[21px] w-[62px] rounded-[3px] bg-[#c9dffa] pl-[3px] leading-[21px] tracking-[0.1px]">(单)GPT-1</div>
      </div>
      <PartsGrid />
    </div>
    <div className="mt-auto flex h-[22px] shrink-0 items-center bg-[#fbfbfb] pr-[2px] pl-[13px]">
      <Field name="提示信息" />
      <div className="ml-auto flex gap-[15px] tracking-[0.2px] whitespace-nowrap">
        <Field name="构件类型" value="钢平台" />
        <Field name="构件数量" value="1" />
        <Field name="总重(kg)" value="0.0" />
        <Field name="总面积(m2)" value="0.0" />
      </div>
      <Svg w={20} h={9} className="mt-[6px] ml-[25px]" stroke="none">
        <path d="M6 0h2v2H6zM3 3h2v2H3zM6 3h2v2H6zM0 6h2v2H0zM3 6h2v2H3zM6 6h2v2H6zM18 1h2v2h-2zM15 4h2v2h-2zM18 4h2v2h-2zM12 7h2v2h-2zM15 7h2v2h-2zM18 7h2v2h-2z" fill="#777" />
      </Svg>
    </div>
  </div>
);

/* ---------- status bar ---------- */

const snapTools = [
  { icon: <path d="M2 2v14h14M2 11h5v5" /> },
  { icon: <><path d="M4 2.500h10q2 0 2 2V14q0 2-2 2H4q-2 0-2-2V5" /><circle cx="1.800" cy="2" r="1.600" stroke={BLUE} fill="#fff" /></>, on: true, menu: true },
  { icon: <><path d="M8 1l7 4v8l-7 4-7-4V7M1 5l7 4 7-4M8 9v8" /><circle cx="2" cy="6" r="1.800" stroke={BLUE} fill="#fff" /></>, on: true, menu: true },
  { icon: <path d="M1 1l16 16M17 1L1 17" stroke="#999" /> },
  { icon: <><circle cx="7.500" cy="10" r="7" /><path d="M14 2L6 11h8" /></>, menu: true },
  { icon: <><path d="M13 2L2 15" /><path d="M2 15.500h14" strokeWidth="2" stroke="#999" /><path d="M7 9.500q3 1 3 5" /></>, menu: true },
  { icon: <g stroke={BLUE}><path d="M4 1v8M0 5h8" /><rect x="7.500" y="10.500" width="9" height="5" fill={BLUE} /></g>, on: true, menu: true },
  { icon: <><path d="M2 2h14v14H2z" /><path d="M5 5h5v8H5zM8 8h5v5H8z" stroke={BLUE} /><path d="M1 1h2v2H1zM15 1h2v2h-2zM1 15h2v2H1zM15 15h2v2h-2z" /></> },
  { icon: <><path d="M3 2h6v14H3z" stroke={BLUE} fill={PALE} /><path d="M9 8h7v8H9" /></> },
  { icon: <><path d="M2 16Q2 4 15 3" /><path d="M1 14h3v3H1zM4 5h3v3H4zM14 1h3v3h-3z" stroke="#999" strokeWidth=".8" /><path d="M11 10l5 4-4 3z" fill={DARK} stroke="none" /></> },
];

const StatusBar = () => (
  <div className="flex h-[32px] shrink-0 items-center bg-[#fbfbfb] pl-[2px] whitespace-nowrap">
    <Field className="w-[90px]" name="层高" value="12.000" />
    <Field className="w-[110px]" name="底标高" value="0.000" />
    <Field className="w-[110px]" name="选中图元" value="0" />
    <Field className="w-[110px]" name="隐藏图元" value="32" />
    <div className="flex gap-[3px]">
      {snapTools.map((t, i) => (
        <div
          key={i}
          className={clsx(
            'flex h-[25px] items-center rounded-[3px] border px-[3px]',
            t.menu ? 'w-[36px] justify-between' : 'w-[25px] justify-center',
            t.on ? 'border-[#3d8ee8] bg-[#d7e5fb]' : 'border-[#9a9a9a] bg-white'
          )}
        >
          <Svg w={18} h={18} sw={1.100}>{t.icon}</Svg>
          {t.menu && <Caret w={5} />}
        </div>
      ))}
      <div className="flex h-[26px] w-[100px] items-center justify-between rounded-[3px] border border-[#b4b4b4] bg-white pr-[4px] pl-[3px]">
        <span>A轴工作平面</span>
        <Caret w={5} />
      </div>
    </div>
  </div>
);

/* ---------- windows taskbar ---------- */

const CloudMark = ({ size }) => (
  <svg width={size} height={size} viewBox="0 0 32 32">
    <rect width="32" height="32" rx="5" fill="#fcaf17" />
    <path d="M12.500 24H8.500Q4 23.500 4 20t4.500-4Q9 10 14.500 10q4 0 5.500 4M12 24q2 0 4-2.500l4-5q2-2.500 5-1.500 3.500 1.500 3 5-.5 4-5 4-2.500 0-4-2" fill="none" stroke="#fff" strokeWidth="3" />
  </svg>
);

const SwirlMark = ({ size }) => (
  <svg width={size} height={size} viewBox="0 0 32 32">
    <path d="M31 3Q22-1 12 3 1 9 2 19q2 11 13 12 4 0 7-2l6 1q-2-3 1-6 3-8-5-11-8-1-9 5 5-2 6 2 0 5-5 5-6-1-6-8 1-8 9-9 8 0 12-5z" fill="#1e8fe6" stroke="#0c62b4" />
    <path d="M6 15Q8 7 18 4" fill="none" stroke="#7fd0ff" strokeWidth="1.500" />
  </svg>
);

const BrowserMark = ({ size }) => (
  <svg width={size} height={size} viewBox="0 0 32 32">
    <circle cx="16" cy="16" r="14.500" fill="#f4fbe9" />
    <path d="M7 18h19q0-11-10-11T6 17.500 16 27q7 0 9.500-5h-5q-2 2-4.500 2-5 0-5-6M11 14.500q1-4 5-4t5 4z" fill="#3fae29" fillRule="evenodd" />
    <path d="M4 29Q-1 24 12 11 23 1 28 3q2 2-1 7" fill="none" stroke="#5cc22e" strokeWidth="2.500" />
  </svg>
);

const TaskButton = ({ active, children }) => (
  <div
    className={clsx(
      'flex h-[39px] w-[59px] items-center justify-center rounded-[3px] border border-[#d5ecf8]/80 ring-1 ring-[#1d4f78]/60 ring-inset',
      active ? 'bg-gradient-to-br from-[#d9eef8] via-[#a9d7ee] to-[#d5eff9]' : 'bg-gradient-to-br from-[#8cc3e0] via-[#3f8fc2] to-[#62b4de]'
    )}
  >
    {children}
  </div>
);

const Dots = () => (
  <div className="h-[31px] w-[9px] bg-[radial-gradient(circle,#0c2c4c_0.9px,transparent_1.2px)] bg-[length:3px_4px]" />
);

const Taskbar = () => (
  <div className="relative flex h-[40px] shrink-0 items-center overflow-hidden border-t border-[#1d3a55] bg-[linear-gradient(90deg,#16507f_0%,#2473a8_4%,#5db2dd_20%,#5fb1de_27%,#3e9bd2_38%,#3d98d2_50%,#2a80c4_60%,#2070b8_70%,#1d66ae_79%,#1a4f8c_82%,#173f70_100%)] shadow-[inset_0_1px_0_#7fb9dd]">
    <svg width="1920" height="40" className="absolute inset-0">
      <path d="M620 40Q760 0 840 0H780Q700 30 560 36z" fill="#8fd0f2" opacity=".25" />
      <path d="M700 40L860 0h30L760 40z" fill="#a5daf7" opacity=".25" />
      <path d="M1040 0h80l60 40h-90z" fill="#4aa0e0" opacity=".25" />
      <path d="M1300 0h24q30 14 58 40h-22Q1335 16 1300 0z" fill="#a6d2f8" opacity=".8" />
    </svg>
    <div className="relative flex w-full items-center">
      <svg width="38" height="38" viewBox="0 0 38 38" className="ml-[8px]">
        <defs>
          <radialGradient id="orb" cx=".5" cy=".9" r=".9">
            <stop offset="0" stopColor="#5fd4ff" />
            <stop offset=".45" stopColor="#1c6fae" />
            <stop offset="1" stopColor="#0e3357" />
          </radialGradient>
        </defs>
        <circle cx="19" cy="19" r="18" fill="url(#orb)" stroke="#7fb8d8" />
        <path d="M5 12Q19-2 33 12 19 20 5 12z" fill="#fff" opacity=".25" />
        <path d="M11 11q4-2 8 0l-1.500 7q-4-2-8 0z" fill="#ef5a28" />
        <path d="M20.500 11.500q4 2 8 0L27 18.500q-4 2-8 0z" fill="#8bc53f" />
        <path d="M9 19.500q4-2 8 0l-1.500 7q-4-2-8 0z" fill="#3fa5e8" />
        <path d="M18.500 20q4 2 8 0L25 27q-4 2-8 0z" fill="#fdc81e" />
      </svg>
      <span className="ml-[12px]"><Dots /></span>
      <div className="ml-[8px] flex gap-[3px]">
        <TaskButton><CloudMark size={32} /></TaskButton>
        <TaskButton><SwirlMark size={32} /></TaskButton>
        <TaskButton><BrowserMark size={32} /></TaskButton>
        <TaskButton>
          <span className="flex h-[32px] w-[32px] items-center justify-center rounded-[5px] bg-[#2e8df7] text-[24px] leading-none font-medium text-white">预</span>
        </TaskButton>
        <TaskButton active>
          <span className="flex h-[32px] w-[32px] items-center justify-center rounded-[5px] bg-[#c9eff0]"><Logo w={18} h={22} /></span>
        </TaskButton>
      </div>
      <span className="ml-auto"><Dots /></span>
      <Svg w={16} h={16} className="-mt-[4px] ml-[9px]" stroke="#ddd">
        <path d="M1 7h14v7H1zM3 9h10M3 11.500h10M3 7q2-6 10-5" />
      </Svg>
      <span className="-mt-[5px] ml-[7px] flex h-[15px] w-[15px] items-center justify-center rounded-full border border-white bg-[#1a2ea8] text-[11px] leading-none font-bold text-white">?</span>
      <Svg w={8} h={18} className="-mt-[5px] ml-[10px]" stroke="#fff">
        <path d="M.500 3h5v4h-5zM2.500 3V1H8v4H5.500" />
        <path d="M1 14h6l-3 3z" fill="#fff" stroke="none" />
      </Svg>
      <div className="ml-[11px] flex items-center gap-[8px]">
        <SwirlMark size={16} />
        <svg width="16" height="16"><rect width="16" height="16" rx="2" fill="#fff" /><path d="M1 11h14v4H1z" fill="#f58a2a" /><path d="M12 3q-8-1-8 5 2 4 6 2V7l4 4" fill="none" stroke="#1e7ad6" strokeWidth="2" /></svg>
        <CloudMark size={16} />
        <BrowserMark size={16} />
        <svg width="16" height="16"><path d="M2 1h5v6H2zM3 7h3v5" fill="#bbb" stroke="#777" /><circle cx="11" cy="11" r="5" fill="#2ea52e" /><path d="M8.500 11l2 2 3-4" stroke="#fff" fill="none" strokeWidth="1.500" /></svg>
        <svg width="16" height="16"><path d="M1 5h4l5-4v14l-5-4H1z" fill="#e2725b" stroke="#fff" strokeWidth=".7" /><path d="M12 4q3 4 0 8" stroke="#aaa" fill="none" /></svg>
        <svg width="16" height="16"><circle cx="8" cy="8" r="7.500" fill="#5aad1e" /><circle cx="8" cy="8" r="6" fill="#ffe21f" /><path d="M8 4v8M4 8h8" stroke="#1d7a22" strokeWidth="2.400" /></svg>
        <svg width="16" height="16"><path d="M1 11h2v3H1zM4 9h2v5H4zM7 7h2v7H7zM10 5h2v9h-2zM13 2h2v12h-2z" fill="#fff" /></svg>
        <svg width="16" height="16"><path d="M1 5.500h3l4-3.500v12l-4-3.500H1z" fill="#fff" /><path d="M10 5q2 3 0 6M12.500 3q3.500 5 0 10" stroke="#fff" fill="none" /></svg>
      </div>
      <div className="ml-[18px] flex w-[54px] flex-col items-center text-[12px] leading-[18px] tracking-[0.2px] whitespace-nowrap text-white">
        <span>15:56</span>
        <span>2025/4/1</span>
      </div>
      <svg width="17" height="16" className="ml-[22px]"><rect width="17" height="16" fill="#fff" /><path d="M7 5l4 3-4 3z" fill="#173f70" /></svg>
      <div className="ml-[11px] h-[38px] w-[14px] border border-[#7b9abc] bg-gradient-to-b from-[#6f8db2] to-[#1f4878]" />
    </div>
  </div>
);

export default function App() {
  return (
    <div className="relative flex h-[1080px] w-[1920px] flex-col overflow-hidden bg-[#f0f0f0] font-['Open_Sans','Noto_Sans_CJK_SC',sans-serif] text-[12px] text-[#333]">
      <TitleBar />
      <Ribbon />
      <FilterBar />
      <div className="flex h-[842px] shrink-0 bg-[#fafafa]">
        <NavPanel />
        <div className="ml-[4px] flex w-[291px] shrink-0 flex-col">
          <ComponentPanel />
          <PropertyPanel />
        </div>
        <Viewport />
        <div className="mt-[372px] h-[100px] w-[4px] shrink-0 bg-[#626a76]">
          <svg width="4" height="100"><path d="M0 47l3 3-3 3z" fill="#ddd" /></svg>
        </div>
        <DisplayPanel />
      </div>
      <StatusBar />
      <Taskbar />
      <Dialog />
    </div>
  );
}
